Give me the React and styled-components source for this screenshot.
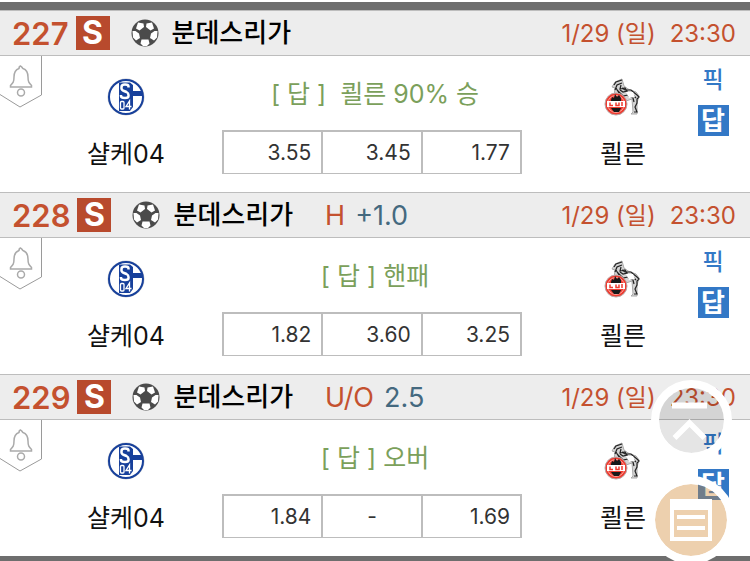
import React from "react";
import styled, { createGlobalStyle } from "styled-components";

const GlobalStyle = createGlobalStyle`
  * { box-sizing: border-box; }
  body {
    margin: 0;
    background: #fff;
    color: #111;
    font-family: Inter, "Noto Sans CJK KR", sans-serif;
  }
  button { font: inherit; padding: 0; margin: 0; border: 0; background: none; cursor: pointer; }
`;

const Page = styled.main`
  margin-top: 2px;
  border-top: 8px solid #6e6e6e;
  border-bottom: 8px solid #6e6e6e;
`;

const Match = styled.article`
  width: 100%;
`;

const MatchHeader = styled.header`
  display: flex;
  align-items: center;
  height: 46px;
  padding: 0 14px 0 12px;
  background: #ededed;
  border-top: 1px solid #bdbdbd;
  border-bottom: 1px solid #bdbdbd;
  white-space: nowrap;
`;

const MatchNumber = styled.span`
  color: #c4512f;
  font-size: 31px;
  font-weight: 600;
`;

const SingleBadge = styled.span`
  width: 34px;
  height: 34px;
  margin: 0 21px 0 7px;
  background: #b84a2d;
  color: #fff;
  font-size: 32px;
  font-weight: 700;
  line-height: 34px;
  text-align: center;
`;

const League = styled.h2`
  margin: 0 0 0 13px;
  color: #000;
  font-size: 26px;
  line-height: 36px;
  font-weight: 500;
`;

const Market = styled.span`
  display: flex;
  gap: 10px;
  margin-left: 32px;
  color: #c4512f;
  font-size: 27px;
`;

const Line = styled.span`
  color: #44697f;
`;

const Kickoff = styled.time`
  display: flex;
  gap: 14px;
  margin-left: auto;
  padding-top: 2px;
  color: #c4512f;
  font-size: 24px;
  line-height: 36px;
`;

const MatchBody = styled.div`
  display: grid;
  grid-template-columns: 78px 96fr 396fr 106fr 74px;
  height: 136px;
`;

const AlertButton = styled.button`
  align-self: start;
  justify-self: start;
  svg { display: block; }
`;

const Team = styled.div`
  display: flex;
  flex-direction: column;
  align-items: center;
  gap: 20px;
  padding-top: 22px;
  font-size: 25px;
  line-height: 36px;
  white-space: nowrap;
  svg { display: block; }
`;

const Center = styled.div`
  display: flex;
  flex-direction: column;
  align-items: center;
  gap: 18px;
  padding-top: 20px;
`;

const Tip = styled.p`
  margin: 0;
  padding-left: 6px;
  color: #7ba05b;
  font-size: 25px;
  line-height: 36px;
  white-space: pre;
`;

const Odds = styled.table`
  width: 300px;
  table-layout: fixed;
  border-spacing: 0;
  border: solid #bdbdbd;
  border-width: 2px 0 1px 2px;
`;

const Odd = styled.td`
  height: 41px;
  padding: 0 ${(p) => (p.$empty ? 0 : 10)}px 0 0;
  border-right: 2px solid #bdbdbd;
  color: #333;
  font-size: 21px;
  text-align: ${(p) => (p.$empty ? "center" : "right")};
`;

const Picks = styled.div`
  display: flex;
  flex-direction: column;
  align-items: center;
  gap: 9px;
  padding-top: 8px;
`;

const PickButton = styled.button`
  width: 31px;
  height: ${(p) => (p.$filled ? 31 : 32)}px;
  background: ${(p) => (p.$filled ? "#3378c6" : "transparent")};
  color: ${(p) => (p.$filled ? "#fff" : "#3378c6")};
  font-size: ${(p) => (p.$filled ? 26 : 23)}px;
  font-weight: ${(p) => (p.$filled ? 700 : 500)};
  line-height: 32px;
`;

const Floating = styled.div`
  position: fixed;
  right: 15px;
  bottom: -3px;
  display: flex;
  flex-direction: column;
  align-items: center;
  gap: 15px;
`;

const RoundButton = styled.button`
  display: grid;
  place-items: center;
  width: ${(p) => p.$size}px;
  height: ${(p) => p.$size}px;
  border: 8px solid #fff;
  border-radius: 50%;
  background: ${(p) => p.$tint};
  background-clip: padding-box;
  svg { display: block; }
`;

function BellTag() {
  return (
    <svg width="42" height="52" viewBox="0 0 42 52" fill="none" stroke="#999">
      <path d="M41.5 0V39L20 51L0 38.500" stroke="#9a9a9a" />
      <g stroke="#aaa" strokeWidth="1.500">
        <path d="M20 10C22 10 22 12 23 12.500C27 14 28 17 28 21C28 26 29 27 31.500 29.500V31H10.500V29.500C13 27 14 26 14 21C14 17 15 14 19 12.500C19 12 19 10 21 10" />
        <circle cx="21" cy="36.500" r="3.500" />
      </g>
    </svg>
  );
}

function SoccerBall() {
  return (
    <svg width="28" height="28" viewBox="0 0 28 28">
      <circle cx="14" cy="14" r="13.500" fill="#4b4b4b" />
      <g fill="#fff">
        <path d="M7 3.500L12.500 4.500L13 8L8.500 11.500L5 9.500Z" />
        <path d="M21 3.500L15.500 4.500L15 8L19.500 11.500L23 9.500Z" />
        <path d="M1.500 12L4.500 12L8 14.500L9 19L5 21.500L2 18.500Z" />
        <path d="M26.500 12L23.500 12L20 14.500L19 19L23 21.500L26 18.500Z" />
        <path d="M10.500 20.500H17.500L18.500 24.500L16 27H12L9.500 24.500Z" />
      </g>
    </svg>
  );
}

function SchalkeCrest() {
  return (
    <svg width="38" height="38" viewBox="0 0 38 38" fill="none">
      <circle cx="19" cy="19" r="18.500" fill="#c9cbd0" />
      <circle cx="19" cy="19" r="17" fill="#fff" stroke="#17409b" strokeWidth="2" />
      <path d="M12 4.500H23L26 7V13H36V18H26V29L23 33H12Z" fill="#17409b" />
      <path d="M21.500 9.500V8.500Q21.500 6.500 18 6.500Q14.500 6.500 14.500 9V10.500Q14.500 12 17 13L19.500 14Q21.500 15 21.500 17V18Q21.500 20 18 20Q14 20 14 18V17" stroke="#fff" strokeWidth="2.500" />
      <rect x="13.500" y="23.500" width="3.500" height="7.500" rx="1" stroke="#fff" strokeWidth="1.300" />
      <path d="M22.500 31.500V23L19 28.500H24.500" stroke="#fff" strokeWidth="1.300" />
    </svg>
  );
}

function KolnCrest() {
  return (
    <svg width="38" height="38" viewBox="0 0 38 38" fill="none">
      <path d="M18 1L11 4L8 9L11 10L10 18L22 23L28 21L29 34L27 36H33V25L35 18L32 14L24 11L20 8Z" fill="#d4d4d4" stroke="#aaa" />
      <path d="M18 2L12 4L10 7M18 5L13 7L11 12M17 7L16 11L21 10L23 13L19 14L16 12M13 12L19 18L24 17M18 10L21 12L27 12L33 17L35 19L33 21V25L31 29L33 34H30M24 18L29 20L30 24M29 17L32 20M12 10L15 15" stroke="#222" strokeWidth="1.200" />
      <path d="M22 14L29 14L31 19L25 20Z" fill="#fff" />
      <circle cx="12" cy="26" r="11" fill="#ef3b30" stroke="#b8aaaa" />
      <circle cx="12" cy="26" r="8.500" stroke="#f9a49c" />
      <path d="M7 22L8 19L10 20L11 16L13 19L15 17L17 20V23H7Z" fill="#16191a" />
      <path d="M7 30H17L15 34H10Z" fill="#16191a" />
      <path d="M3 23H21V29H3Z" fill="#fff" />
      <path d="M6 24.500V27.500H9M12 24.500V27.500H15V24.500M18 24V28" stroke="#ef3b30" strokeWidth="1.500" />
    </svg>
  );
}

function TopIcon() {
  return (
    <svg width="38" height="38" viewBox="0 0 38 38" fill="none" stroke="#fff" strokeWidth="6">
      <path d="M0 3.500H35" />
      <path d="M2.500 36L17.500 21L32.500 36" strokeWidth="5.500" />
    </svg>
  );
}

function ListIcon() {
  return (
    <svg width="42" height="42" viewBox="0 0 42 42" fill="none" stroke="#fff" strokeWidth="4">
      <path d="M2 2H40V40H2ZM7 18H35M7 29H35" />
      <path d="M0 0H42V11H0Z" fill="#fff" stroke="none" />
    </svg>
  );
}

const matches = [
  { no: 227, tip: "[ 답 ]  쾰른 90% 승", odds: ["3.55", "3.45", "1.77"] },
  { no: 228, market: "H", line: "+1.0", tip: "[ 답 ] 핸패", odds: ["1.82", "3.60", "3.25"] },
  { no: 229, market: "U/O", line: "2.5", tip: "[ 답 ] 오버", odds: ["1.84", "-", "1.69"] },
];

function MatchRow({ match }) {
  return (
    <Match>
      <MatchHeader>
        <MatchNumber>{match.no}</MatchNumber>
        <SingleBadge>S</SingleBadge>
        <SoccerBall />
        <League>분데스리가</League>
        {match.market && (
          <Market>
            {match.market}
            <Line>{match.line}</Line>
          </Market>
        )}
        <Kickoff>
          <span>1/29 (일)</span>
          <span>23:30</span>
        </Kickoff>
      </MatchHeader>
      <MatchBody>
        <AlertButton type="button" aria-label="알림">
          <BellTag />
        </AlertButton>
        <Team>
          <SchalkeCrest />
          샬케04
        </Team>
        <Center>
          <Tip>{match.tip}</Tip>
          <Odds>
            <tbody>
              <tr>
                {match.odds.map((odd, i) => (
                  <Odd key={i} $empty={odd === "-"}>{odd}</Odd>
                ))}
              </tr>
            </tbody>
          </Odds>
        </Center>
        <Team>
          <KolnCrest />
          쾰른
        </Team>
        <Picks>
          <PickButton type="button">픽</PickButton>
          <PickButton type="button" $filled>답</PickButton>
        </Picks>
      </MatchBody>
    </Match>
  );
}

export default function App() {
  return (
    <>
      <GlobalStyle />
      <Page>
        {matches.map((match) => (
          <MatchRow key={match.no} match={match} />
        ))}
      </Page>
      <Floating>
        <RoundButton type="button" aria-label="맨 위로" $size={81} $tint="rgba(0, 0, 0, 0.1)">
          <TopIcon />
        </RoundButton>
        <RoundButton type="button" aria-label="목록" $size={88} $tint="rgba(208, 135, 47, 0.39)">
          <ListIcon />
        </RoundButton>
      </Floating>
    </>
  );
}
